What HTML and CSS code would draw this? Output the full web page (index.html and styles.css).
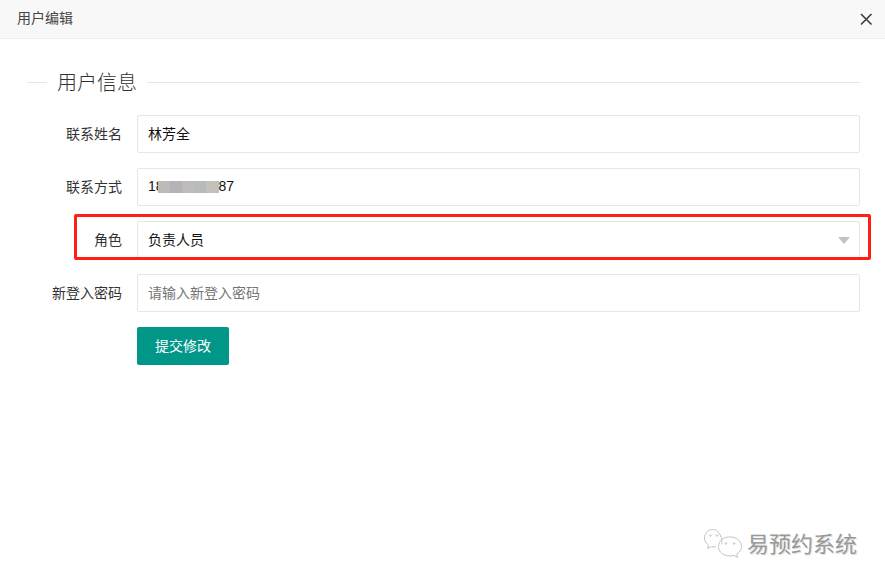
FILE: index.html
```
<!DOCTYPE html>
<html lang="zh-CN">
<head>
<meta charset="utf-8">
<title>用户编辑</title>
<link rel="stylesheet" href="styles.css">
</head>
<body>
<header class="titlebar">
  <span class="title">用户编辑</span>
  <svg class="close" width="14" height="14" viewBox="0 0 14 14" aria-label="关闭"><path d="M2 2L12.500 12.500M12.500 2L2 12.500" stroke="#3a3a46" stroke-width="1.600" fill="none"/></svg>
</header>
<main class="content">
  <fieldset class="group">
    <legend class="legend">用户信息</legend>
    <form class="form">
      <div class="row">
        <label class="label">联系姓名</label>
        <div class="input">林芳全</div>
      </div>
      <div class="row">
        <label class="label">联系方式</label>
        <div class="input phone">18<span class="mask"><i class="m1"></i><i class="m2"></i><i class="m3"></i><i class="m4"></i><i class="m5"></i></span>87</div>
      </div>
      <div class="row">
        <label class="label">角色</label>
        <div class="input select">负责人员<span class="caret"></span></div>
      </div>
      <div class="row">
        <label class="label">新登入密码</label>
        <div class="input placeholder">请输入新登入密码</div>
      </div>
      <div class="row actions">
        <button class="submit" type="button">提交修改</button>
      </div>
    </form>
  </fieldset>
</main>
<div class="highlight"></div>
<div class="watermark">
  <svg class="wechat" width="42" height="34" viewBox="0 0 42 34" fill="none" stroke="#c4c4c4" stroke-width="1">
    <path d="M18 16.500C18.500 8 14 2 9.500 1.500C4 1 .500 5.500 .500 10C.500 13 2 15.500 4.500 17L3.500 20.500L7.500 18.500C9 19 10.500 19 12 18.800"/>
    <path d="M27 9C20.500 8.500 14.500 12.500 14.500 18.500C14.500 24.500 20 28 26 28C27.500 28 29 27.700 30 27.300L33.500 29.500L32.700 26C35.500 24.500 37.500 21.700 37.500 18.500C37.500 13 32.500 9.300 27 9Z"/>
    <circle cx="6.500" cy="7.500" r=".8"/><circle cx="13" cy="7.500" r=".8"/>
    <circle cx="22" cy="15.500" r=".8"/><circle cx="30" cy="15.500" r=".8"/>
  </svg>
  <span class="brand">易预约系统</span>
</div>
</body>
</html>
```

FILE: styles.css
```
* { box-sizing: border-box; }
html, body { margin: 0; height: 100%; overflow: hidden; }
body {
  position: relative;
  background: #fff;
  color: #333;
  font-family: "Liberation Sans", "Noto Sans CJK SC", sans-serif;
  font-size: 14px;
}
.titlebar {
  height: 39px;
  display: flex;
  align-items: center;
  justify-content: space-between;
  padding: 0 12px 5px 17px;
  background: #f8f8f8;
  border-bottom: 1px solid #eee;
}
.title { font-size: 14px; color: #444; }
.close { display: block; margin-top: 5px; }
.content { padding: 31px 25px 0 27px; }
.group {
  margin: 0;
  padding: 0;
  border: 0;
  border-top: 1px solid #e6e6e6;
  min-width: 0;
}
.legend {
  margin-left: 20px;
  padding: 2px 10px 0;
  font-size: 20px;
  line-height: 22px;
  font-weight: 300;
  color: #333;
}
.form {
  display: flex;
  flex-direction: column;
  gap: 15px;
  margin-top: 21px;
}
.row { display: flex; align-items: center; }
.label {
  width: 95px;
  padding-bottom: 2px;
  text-align: right;
  color: #333;
  margin-right: 15px;
  white-space: nowrap;
}
.input {
  flex: 1;
  height: 38px;
  display: flex;
  align-items: center;
  padding: 0 0 2px 10px;
  background: #fff;
  border: 1px solid #e6e6e6;
  border-radius: 2px;
  color: #111;
}
.phone { white-space: nowrap; }
.mask {
  width: 61px;
  height: 12px;
  margin: 2px 0 0 -6px;
  display: flex;
}
.mask i { flex: 1; display: block; }
.m1 { background: #bdbab8; }
.m2 { background: #b4b4b6; }
.m3 { background: #c0bcbb; }
.m4 { background: #b7bbba; }
.m5 { background: #c4c1bc; }
.select { padding-right: 9px; justify-content: space-between; }
.caret {
  width: 0;
  height: 0;
  margin-top: 3px;
  border-left: 6px solid transparent;
  border-right: 6px solid transparent;
  border-top: 7px solid #c2c2c2;
}
.placeholder { color: #757575; }
.actions { padding-left: 110px; }
.submit {
  width: 92px;
  height: 38px;
  padding: 0 0 2px;
  border: 0;
  border-radius: 2px;
  background: #009688;
  color: #fff;
  font: inherit;
}
.highlight {
  position: absolute;
  left: 74px;
  top: 214px;
  width: 797px;
  height: 46px;
  border: 3px solid #ff1f14;
  border-radius: 2px;
}
.watermark {
  position: absolute;
  left: 704px;
  top: 528px;
  display: flex;
  align-items: center;
  gap: 1px;
}
.brand {
  font-size: 22px;
  line-height: 34px;
  color: #999;
  text-shadow: 1px 1px 0 #e2e2e2;
  white-space: nowrap;
}
```
